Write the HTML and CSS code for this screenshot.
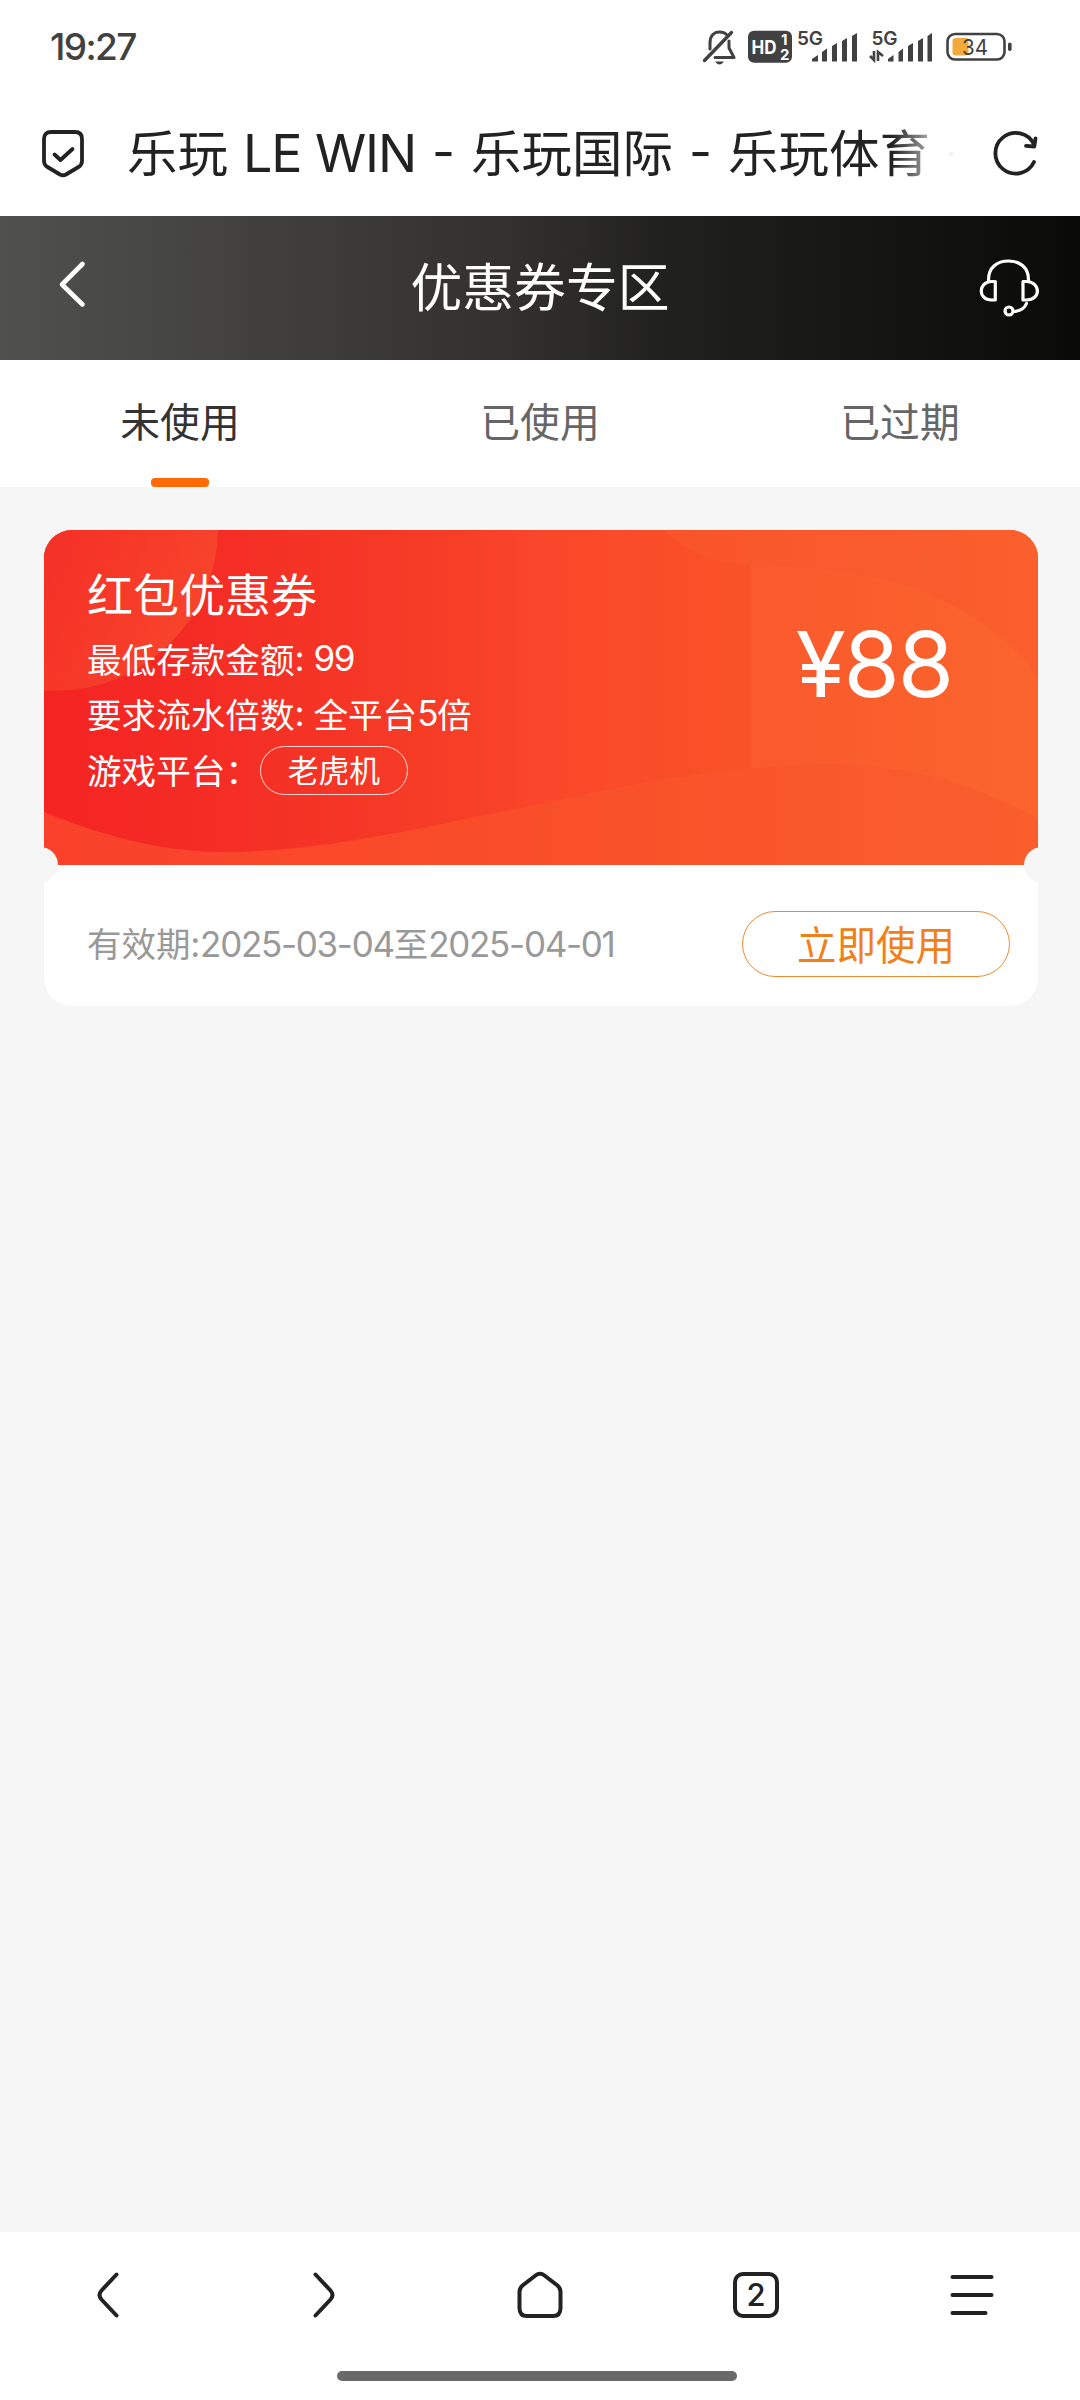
FILE: index.html
```html
<!DOCTYPE html>
<html lang="zh-CN">
<head>
<meta charset="utf-8">
<title>优惠券专区</title>
<link rel="stylesheet" href="styles.css">
</head>
<body>
<div class="status">
  <span class="clock">19:27</span>
  <div class="status-icons">
    <svg class="bell" width="34" height="40" viewBox="0 0 34 40" fill="none" stroke="#414141" stroke-width="3" stroke-linecap="round" stroke-linejoin="round">
      <path d="M8 21V15C8 8 12 4 17.500 4Q22 4 24.500 6.500M27 13V20L32 29.500H13"/>
      <path d="M29.500 4.500L2.500 32.500" stroke-width="3.400"/>
      <path d="M13 33.500H22Q20 36.500 17.500 36.500T13 33.500Z" fill="#414141" stroke="none"/>
    </svg>
    <svg class="hd" width="44" height="40" viewBox="0 0 44 40">
      <rect y="2.700" width="44" height="32" rx="6" fill="#414141"/>
      <text x="3.500" y="26" class="svg-hd" textLength="25" lengthAdjust="spacingAndGlyphs">HD</text>
      <text x="33" y="16.500" class="svg-num">1</text>
      <text x="32" y="31.500" class="svg-num">2</text>
    </svg>
    <svg class="signal" width="62" height="40" viewBox="0 0 62 40" fill="#414141">
      <text x="0" y="17" class="svg-5g" textLength="26">5G</text>
      <path d="M15 33.500V31L21 27V33.500H15ZM25 33.500V24L30 20.500V33.500ZM35 33.500V18L40 15V33.500ZM45 33.500V13L50 10V33.500ZM55 33.500V8L60 5V33.500Z"/>
    </svg>
    <svg class="signal2" width="64" height="40" viewBox="0 0 64 40" fill="#414141">
      <text x="2.500" y="17" class="svg-5g" textLength="26">5G</text>
      <path d="M5 23V32L1 28M9 33V24L14 28" fill="none" stroke="#414141" stroke-width="2.600"/>
      <path d="M19 33.500V31L24.500 27V33.500H19ZM29.500 33.500V24L34 20.500V33.500ZM39 33.500V18L44 15V33.500ZM49 33.500V13L54 10V33.500ZM58.500 33.500V8L63 5V33.500Z"/>
    </svg>
    <svg class="battery" width="66" height="40" viewBox="0 0 66 40">
      <rect x="1.500" y="6" width="57" height="25.500" rx="7.500" fill="none" stroke="#414141" stroke-width="2.600"/>
      <rect x="6.500" y="10" width="16" height="17.500" rx="3" fill="#f3aa3c"/>
      <rect x="62" y="14.500" width="3.600" height="8.500" rx="1.800" fill="#414141"/>
      <text x="16" y="26.700" class="svg-bat" textLength="26" lengthAdjust="spacingAndGlyphs">34</text>
    </svg>
  </div>
</div>
<div class="urlbar">
  <svg class="shield" width="46" height="52" viewBox="0 0 46 52" fill="none" stroke="#222" stroke-width="3.800" stroke-linecap="round" stroke-linejoin="round">
    <path d="M11 4H35Q42 4 42 11V33Q42 37 38.500 39L26 46.500Q23 48 20 46.500L7.500 39Q4 37 4 33V11Q4 4 11 4Z"/>
    <path d="M14.500 26.500L20.500 32L32.500 21"/>
  </svg>
  <div class="site-title"><span class="han">乐玩</span><span class="brand">LE WIN</span><span class="dash">-</span><span class="han">乐玩国际</span><span class="dash">-</span><span class="han">乐玩体育</span><span class="dash">-</span></div>
  <svg class="refresh" width="48" height="48" viewBox="0 0 48 48" fill="none" stroke="#222" stroke-width="3.800" stroke-linecap="round" stroke-linejoin="round">
    <path d="M42 33A20.300 20.300 0 1 1 42 15.500"/>
    <path d="M43.500 9.500L42.300 17.500L34 16.800"/>
  </svg>
</div>
<header class="header">
  <svg width="58" height="58" viewBox="0 0 58 58" fill="none" stroke="#fff" stroke-width="4.600" stroke-linecap="round" stroke-linejoin="round">
    <path d="M39.500 5L19 25.500L39.500 45.500"/>
  </svg>
  <h1>优惠券专区</h1>
  <svg width="60" height="60" viewBox="0 0 60 60" fill="none" stroke="#fff" stroke-width="3.200" stroke-linecap="round" stroke-linejoin="round">
    <path d="M9.500 22C9.500 9.500 18 3 29.500 3S49.500 9.500 49.500 22"/>
    <path d="M16.300 23.500H12.500C-1.200 24 -1.200 42 12.500 42H16.300ZM44 23.500H47.500C62 24 62 42 47.500 42H44Z"/>
    <circle cx="30" cy="53" r="4"/>
    <path d="M34.500 53.500Q44.500 53 47.500 45.500"/>
  </svg>
</header>
<nav class="tabs">
  <div class="tab active">未使用</div>
  <div class="tab">已使用</div>
  <div class="tab">已过期</div>
</nav>
<main class="content">
  <section class="coupon">
    <div class="coupon-top">
      <svg class="waves" width="994" height="335" viewBox="0 0 994 335">
        <defs>
          <linearGradient id="base"><stop offset="0" stop-color="#f42423"/><stop offset=".15" stop-color="#f42b25"/><stop offset=".4" stop-color="#f63d27"/><stop offset=".5" stop-color="#fa462a"/><stop offset=".71" stop-color="#f95328"/><stop offset=".711" stop-color="#fa592c"/><stop offset="1" stop-color="#fb652c"/></linearGradient>
          <linearGradient id="wave"><stop offset="0" stop-color="#f9412b"/><stop offset=".5" stop-color="#f94f29"/><stop offset=".75" stop-color="#f9572c"/><stop offset="1" stop-color="#fa5e2c"/></linearGradient>
          <linearGradient id="crest" x2="1" y2="0"><stop offset="0" stop-color="#f9542a"/><stop offset=".3" stop-color="#f9582d"/><stop offset="1" stop-color="#fa5f2c"/></linearGradient>
          <linearGradient id="disc" gradientUnits="userSpaceOnUse" x1="10" y1="40" x2="150" y2="100"><stop offset="0" stop-color="#f53227"/><stop offset="1" stop-color="#f8442b"/></linearGradient>
        </defs>
        <rect width="994" height="335" fill="url(#base)"/>
        <circle cx="11" cy="-2" r="163" fill="url(#disc)"/>
        <path d="M620 0Q655 34 706 34C800 38 850 48 890 66Q965 102 994 150V0Z" fill="url(#crest)"/>
        <path d="M0 282C70 310 125 323 190 322C290 320 390 295 496 274C600 250 700 235 786 234C880 234 950 265 994 288V335H0Z" fill="url(#wave)"/>
      </svg>
      <div class="details">
        <h2>红包优惠券</h2>
        <p>最低存款金额<span class="colon">:</span><span class="digits">99</span></p>
        <p>要求流水倍数<span class="colon">:</span>全平台<span class="digits">5</span>倍</p>
        <p>游戏平台：<span class="pill">老虎机</span></p>
      </div>
      <div class="amount">¥88</div>
    </div>
    <div class="coupon-bottom">
      <span class="validity"><span class="han">有效期:</span><span class="date">2025-03-04</span><span class="han">至</span><span class="date">2025-04-01</span></span>
      <button class="use">立即使用</button>
    </div>
    <i class="notch left"></i><i class="notch right"></i>
  </section>
</main>
<footer class="toolbar">
  <div class="actions">
    <svg width="54" height="54" viewBox="0 0 54 54"><path d="M35.500 6.500L20.500 22.500Q16.500 27 20.500 31.500L35.500 47.500"/></svg>
    <svg width="54" height="54" viewBox="0 0 54 54"><path d="M18.500 6.500L33.500 22.500Q37.500 27 33.500 31.500L18.500 47.500"/></svg>
    <svg width="54" height="54" viewBox="0 0 54 54"><path d="M22.500 7.500Q27 4 31.500 7.500L44.500 17.500Q47.500 20 47.500 24V40Q47.500 48 40 48H14Q6.500 48 6.500 40V24Q6.500 20 9.500 17.500Z"/></svg>
    <svg width="54" height="54" viewBox="0 0 54 54"><rect x="6" y="6" width="42" height="42" rx="8"/><text x="27" y="37.500" class="svg-tab">2</text></svg>
    <svg width="54" height="54" viewBox="0 0 54 54"><path d="M7.500 9H46.500M7.500 27H46.500M7.500 45H40.500"/></svg>
  </div>
  <div class="gesture"></div>
</footer>
</body>
</html>
```
FILE: styles.css
```css
* { box-sizing: border-box; }
body {
  margin: 0;
  width: 1080px;
  height: 2400px;
  display: flex;
  flex-direction: column;
  overflow: hidden;
  background: #f6f6f6;
  color: #222;
  font-family: "Noto Sans CJK SC", "Inter", sans-serif;
}
svg { display: block; flex: none; }
h1, h2, p { margin: 0; font-weight: 400; }

.status {
  height: 96px;
  padding: 0 68px 0 50px;
  display: flex;
  justify-content: space-between;
  background: #fff;
}
.clock {
  padding-top: 28px;
  font: 500 37px/38px "Inter", sans-serif;
  letter-spacing: -1.6px;
  color: #414141;
}
.status-icons { display: flex; padding-top: 28px; }
.bell { margin-right: 12px; }
.hd { margin-right: 5px; }
.signal { margin-right: 10px; }
.signal2 { margin-right: 13px; }
.svg-hd { font: 700 19px "Inter", sans-serif; fill: #fff; }
.svg-num { font: 700 15px "Inter", sans-serif; fill: #fff; }
.svg-5g { font: 600 19px "Inter", sans-serif; }
.svg-bat { font: 400 22px "Inter", sans-serif; fill: #414141; }

.urlbar {
  height: 120px;
  padding: 0 40px 4px 40px;
  display: flex;
  align-items: center;
  background: #fff;
}
.site-title {
  flex: 1;
  display: flex;
  align-items: center;
  margin: 0 36px 0 41px;
  height: 100px;
  overflow: hidden;
  white-space: nowrap;
  font-size: 50.5px;
  line-height: 92px;
  -webkit-mask-image: linear-gradient(90deg, #000 765px, transparent 828px);
  mask-image: linear-gradient(90deg, #000 765px, transparent 828px);
}
.site-title span { flex: none; }
.site-title .han { padding-bottom: 8px; }
.brand { width: 188px; padding-left: 15px; font: 400 52px/100px "Inter", sans-serif; letter-spacing: -1.1px; }
.dash { width: 55px; padding-bottom: 4px; text-align: center; font: 400 50px/96px "Inter", sans-serif; }
.refresh { margin-bottom: 3px; }

.header {
  height: 144px;
  padding: 0 41px 0 43px;
  display: flex;
  align-items: center;
  justify-content: space-between;
  background: linear-gradient(90deg, #50504e, #31302e 48%, #20201f 62%, #0a0a08);
  color: #fff;
}
.header h1 { padding-bottom: 6px; font-size: 51.8px; line-height: 76px; }

.tabs { height: 127px; display: flex; background: #fff; }
.tab {
  flex: 1;
  display: flex;
  flex-direction: column;
  align-items: center;
  justify-content: space-between;
  font-size: 39.8px;
  line-height: 120px;
  color: #666;
}
.tab.active { color: #333; }
.tab.active::after { content: ""; width: 58px; height: 9px; margin-top: -9px; border-radius: 4px; background: #ff6a06; }

.content { flex: 1; padding: 43px 42px 0 44px; }
.coupon { position: relative; height: 476px; border-radius: 28px; overflow: hidden; background: #fff; }
.coupon-top {
  position: relative;
  height: 335px;
  padding: 32px 86px 0 43px;
  display: flex;
  justify-content: space-between;
  color: #fff;
}
.waves { position: absolute; left: 0; top: 0; }
.details { position: relative; }
.details h2 { font-size: 46px; line-height: 60px; }
.details p { display: flex; align-items: center; height: 55.5px; font-size: 34.6px; }
.details h2 + p { margin-top: 8px; }
.colon { flex: none; width: 19px; font: 400 35px/52px "Inter", sans-serif; }
.digits { padding-top: 1px; font: 400 35px/55px "Inter", sans-serif; letter-spacing: -1.4px; }
.pill {
  display: flex;
  align-items: center;
  justify-content: center;
  width: 148px;
  height: 49px;
  margin-top: 4px;
  padding-bottom: 3px;
  border: 1.5px solid rgba(255, 255, 255, .8);
  border-radius: 25px;
  font-size: 30.8px;
  line-height: 44px;
}
.amount { position: relative; font: 400 91px/110px "Inter", sans-serif; padding-top: 47px; letter-spacing: -2.1px; }
.coupon-bottom {
  height: 141px;
  padding: 17px 28px 0 43px;
  display: flex;
  align-items: center;
  justify-content: space-between;
}
.validity { display: flex; align-items: center; font-size: 34.5px; line-height: 50px; color: #999; }
.validity .han { padding-bottom: 4px; }
.date { font: 400 35px/50px "Inter", sans-serif; letter-spacing: -1.3px; }
.use {
  width: 268px;
  height: 66px;
  padding: 0 0 3px;
  border: 1.5px solid #f08a2e;
  border-radius: 33px;
  background: none;
  color: #f08019;
  font: 400 39.5px/60px "Noto Sans CJK SC", sans-serif;
}
.notch { position: absolute; top: 317px; width: 36px; height: 36px; border-radius: 50%; background: #f6f6f6; }
.notch.left { left: -22px; }
.notch.right { right: -22px; }

.toolbar { height: 168px; background: #fff; }
.actions { display: grid; grid-template-columns: repeat(5, 216px); justify-items: center; padding-top: 36px; }
.actions svg { fill: none; stroke: #222; stroke-width: 4; stroke-linecap: round; stroke-linejoin: round; }
.svg-tab { font: 500 31px "Inter", sans-serif; fill: #222; stroke: none; text-anchor: middle; }
.gesture { width: 400px; height: 10px; margin: 49px auto 0 337px; border-radius: 5px; background: #6a6a6a; }
```
